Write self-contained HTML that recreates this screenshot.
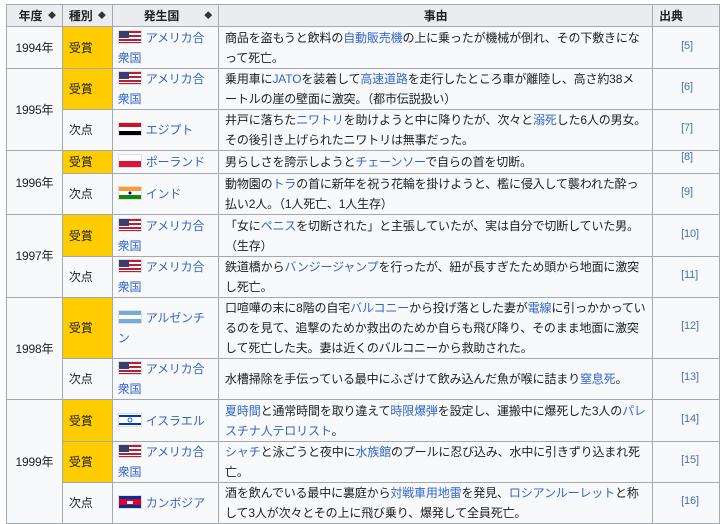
<!DOCTYPE html>
<html><head><meta charset="utf-8"><style>
body{margin:0;background:#fff;font-family:"Liberation Sans","Noto Sans CJK JP",sans-serif;font-size:12px;color:#202122;}
table{position:absolute;left:6px;top:4px;border-collapse:collapse;table-layout:fixed;}
td,th{border:1px solid #a2a9b1;background:#f8f9fa;padding:0 6px;line-height:20px;vertical-align:middle;white-space:nowrap;letter-spacing:-0.15px;}
th{background:#eaecf0;font-weight:bold;height:21px;font-size:12px;}
th .s{float:right;font-size:8px;color:#333;}
.g{background:#fc0;}
a{color:#3366cc;text-decoration:none;}
.c{padding-left:5px;white-space:normal;}
.c svg{vertical-align:-2px;margin-right:4px;border:1px solid #ddd;}
.r{color:#4a6fb5;font-size:11px;padding-left:28px;vertical-align:middle;}
.r span{position:relative;top:-2px;}
.y{text-align:center;padding:0 2px;}
</style></head><body>
<table>
<colgroup><col style="width:56px"><col style="width:50px"><col style="width:107px"><col style="width:431px"><col style="width:67px"></colgroup>
<tr><th>年度 <span class="s">◆</span></th><th style="text-align:left">種別 <span class="s">◆</span></th><th>発生国 <span class="s">◆</span></th><th>事由</th><th style="text-align:left">出典</th></tr>
<tr style="height:42px"><td class="y">1994年</td><td class="g">受賞</td><td class="c"><svg width="22" height="12"><rect width="22" height="12" fill="#b22234"/><rect y="2" width="22" height="2" fill="#fff"/><rect y="6" width="22" height="2" fill="#fff"/><rect y="10" width="22" height="1" fill="#fff"/><rect width="10" height="7" fill="#3c3b6e"/></svg><a>アメリカ合衆国</a></td><td>商品を盗もうと飲料の<a>自動販売機</a>の上に乗ったが機械が倒れ、その下敷きにな<br>って死亡。</td><td class="r"><span>[5]</span></td></tr>
<tr style="height:41px"><td class="y" rowspan="2">1995年</td><td class="g">受賞</td><td class="c"><svg width="22" height="12"><rect width="22" height="12" fill="#b22234"/><rect y="2" width="22" height="2" fill="#fff"/><rect y="6" width="22" height="2" fill="#fff"/><rect y="10" width="22" height="1" fill="#fff"/><rect width="10" height="7" fill="#3c3b6e"/></svg><a>アメリカ合衆国</a></td><td>乗用車に<a>JATO</a>を装着して<a>高速道路</a>を走行したところ車が離陸し、高さ約38メ<br>ートルの崖の壁面に激突。（都市伝説扱い）</td><td class="r"><span>[6]</span></td></tr>
<tr style="height:41px"><td>次点</td><td class="c"><svg width="22" height="12"><rect width="22" height="4" fill="#ce1126"/><rect y="4" width="22" height="4" fill="#fff"/><rect y="8" width="22" height="4" fill="#000"/></svg><a>エジプト</a></td><td>井戸に落ちた<a>ニワトリ</a>を助けようと中に降りたが、次々と<a>溺死</a>した6人の男女。<br>その後引き上げられたニワトリは無事だった。</td><td class="r"><span>[7]</span></td></tr>
<tr style="height:23px"><td class="y" rowspan="2">1996年</td><td class="g">受賞</td><td class="c"><svg width="22" height="12"><rect width="22" height="6" fill="#fff"/><rect y="6" width="22" height="6" fill="#dc143c"/></svg><a>ポーランド</a></td><td>男らしさを誇示しようと<a>チェーンソー</a>で自らの首を切断。</td><td class="r"><span style="top:-5px">[8]</span></td></tr>
<tr style="height:41px"><td>次点</td><td class="c"><svg width="22" height="12"><rect width="22" height="4" fill="#f93"/><rect y="4" width="22" height="4" fill="#fff"/><rect y="8" width="22" height="4" fill="#138808"/><circle cx="11" cy="6" r="1.5" fill="#008"/></svg><a>インド</a></td><td>動物園の<a>トラ</a>の首に新年を祝う花輪を掛けようと、檻に侵入して襲われた酔っ<br>払い2人。（1人死亡、1人生存）</td><td class="r"><span>[9]</span></td></tr>
<tr style="height:42px"><td class="y" rowspan="2">1997年</td><td class="g">受賞</td><td class="c"><svg width="22" height="12"><rect width="22" height="12" fill="#b22234"/><rect y="2" width="22" height="2" fill="#fff"/><rect y="6" width="22" height="2" fill="#fff"/><rect y="10" width="22" height="1" fill="#fff"/><rect width="10" height="7" fill="#3c3b6e"/></svg><a>アメリカ合衆国</a></td><td>「女に<a>ペニス</a>を切断された」と主張していたが、実は自分で切断していた男。<br>（生存）</td><td class="r"><span>[10]</span></td></tr>
<tr style="height:41px"><td>次点</td><td class="c"><svg width="22" height="12"><rect width="22" height="12" fill="#b22234"/><rect y="2" width="22" height="2" fill="#fff"/><rect y="6" width="22" height="2" fill="#fff"/><rect y="10" width="22" height="1" fill="#fff"/><rect width="10" height="7" fill="#3c3b6e"/></svg><a>アメリカ合衆国</a></td><td>鉄道橋から<a>バンジージャンプ</a>を行ったが、紐が長すぎたため頭から地面に激突<br>し死亡。</td><td class="r"><span>[11]</span></td></tr>
<tr style="height:60px"><td class="y" rowspan="2">1998年</td><td class="g">受賞</td><td class="c"><svg width="22" height="12"><rect width="22" height="12" fill="#74acdf"/><rect y="4" width="22" height="4" fill="#fff"/></svg><a>アルゼンチン</a></td><td>口喧嘩の末に8階の自宅<a>バルコニー</a>から投げ落とした妻が<a>電線</a>に引っかかってい<br>るのを見て、追撃のためか救出のためか自らも飛び降り、そのまま地面に激突<br>して死亡した夫。妻は近くのバルコニーから救助された。</td><td class="r"><span>[12]</span></td></tr>
<tr style="height:41px"><td>次点</td><td class="c"><svg width="22" height="12"><rect width="22" height="12" fill="#b22234"/><rect y="2" width="22" height="2" fill="#fff"/><rect y="6" width="22" height="2" fill="#fff"/><rect y="10" width="22" height="1" fill="#fff"/><rect width="10" height="7" fill="#3c3b6e"/></svg><a>アメリカ合衆国</a></td><td>水槽掃除を手伝っている最中にふざけて飲み込んだ魚が喉に詰まり<a>窒息死</a>。</td><td class="r"><span>[13]</span></td></tr>
<tr style="height:42px"><td class="y" rowspan="3">1999年</td><td class="g">受賞</td><td class="c"><svg width="22" height="12"><rect width="22" height="12" fill="#fff"/><rect y="1" width="22" height="2" fill="#0038b8"/><rect y="9" width="22" height="2" fill="#0038b8"/><circle cx="11" cy="6" r="2" fill="none" stroke="#0038b8" stroke-width=".8"/></svg><a>イスラエル</a></td><td><a>夏時間</a>と通常時間を取り違えて<a>時限爆弾</a>を設定し、運搬中に爆死した3人の<a>パレ<br>スチナ人テロリスト</a>。</td><td class="r"><span>[14]</span></td></tr>
<tr style="height:41px"><td class="g">受賞</td><td class="c"><svg width="22" height="12"><rect width="22" height="12" fill="#b22234"/><rect y="2" width="22" height="2" fill="#fff"/><rect y="6" width="22" height="2" fill="#fff"/><rect y="10" width="22" height="1" fill="#fff"/><rect width="10" height="7" fill="#3c3b6e"/></svg><a>アメリカ合衆国</a></td><td><a>シャチ</a>と泳ごうと夜中に<a>水族館</a>のプールに忍び込み、水中に引きずり込まれ死<br>亡。</td><td class="r"><span>[15]</span></td></tr>
<tr style="height:41px"><td>次点</td><td class="c"><svg width="22" height="12"><rect width="22" height="12" fill="#032ea1"/><rect y="3" width="22" height="6" fill="#e00025"/><rect x="8" y="5" width="6" height="3" fill="#fff"/></svg><a>カンボジア</a></td><td>酒を飲んでいる最中に裏庭から<a>対戦車用地雷</a>を発見、<a>ロシアンルーレット</a>と称<br>して3人が次々とその上に飛び乗り、爆発して全員死亡。</td><td class="r"><span>[16]</span></td></tr>
</table>
</body></html>
